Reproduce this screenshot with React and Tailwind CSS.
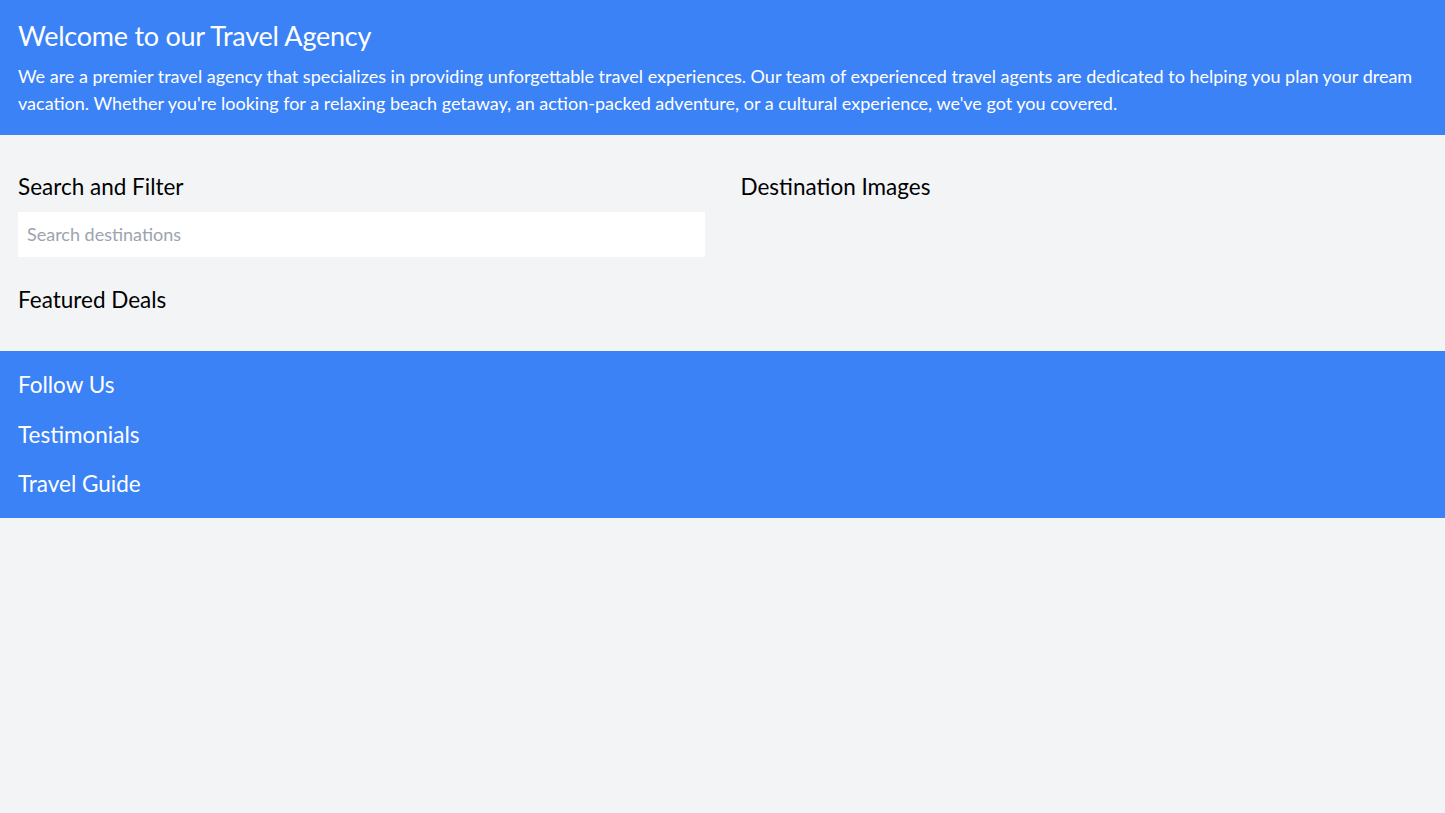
import React from 'react'

export default function App() {
  return (
    <div className="min-h-screen bg-[#f3f4f6] font-['Lato',sans-serif]">
      {/* Header */}
      <header className="bg-[#3b82f6] p-[18px] text-white">
        <h1 className="text-[27px] leading-[36px] tracking-[-0.25px] mb-[9px]">Welcome to our Travel Agency</h1>
        <p className="text-[18px] leading-[27px]">
          We are a premier travel agency that specializes in providing unforgettable travel experiences. Our team of experienced travel agents are dedicated to helping you plan your dream vacation. Whether you're looking for a relaxing beach getaway, an action-packed adventure, or a cultural experience, we've got you covered.
        </p>
      </header>

      {/* Main */}
      <main className="px-[18px] py-[36px] grid grid-cols-2 gap-[36px]">
        <div>
          <section className="mb-[27px]">
            <h2 className="text-[22.5px] leading-[31.5px] mb-[9px] text-black">Search and Filter</h2>
            <input
              type="text"
              placeholder="Search destinations"
              className="w-full bg-white p-[9px] text-[18px] leading-[27px] outline-none placeholder:text-[#9ca3af]"
            />
          </section>
          <section>
            <h2 className="text-[22.5px] leading-[31.5px] text-black">Featured Deals</h2>
          </section>
        </div>
        <div>
          <h2 className="text-[22.5px] leading-[31.5px] text-black">Destination Images</h2>
        </div>
      </main>

      {/* Footer */}
      <footer className="bg-[#3b82f6] p-[18px] text-white flex flex-col gap-[18px]">
        <h2 className="text-[22.5px] leading-[31.5px]">Follow Us</h2>
        <h2 className="text-[22.5px] leading-[31.5px]">Testimonials</h2>
        <h2 className="text-[22.5px] leading-[31.5px]">Travel Guide</h2>
      </footer>
    </div>
  )
}
